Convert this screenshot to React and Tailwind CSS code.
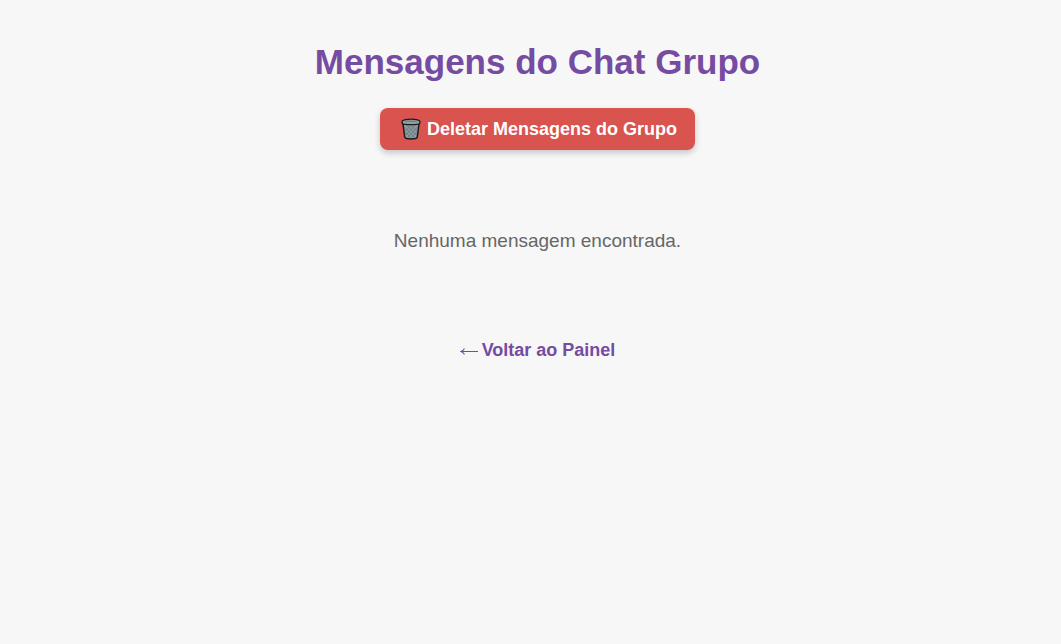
function TrashIcon() {
  return (
    <svg viewBox="0 0 20 22" className="h-[22px] w-5 shrink-0" aria-hidden="true">
      <path d="M1.8 4.5 L3.7 18.6 Q4 20.3 5.6 20.6 Q10 21.3 14.4 20.6 Q16 20.3 16.3 18.6 L18.2 4.5 Z" fill="#8c9da3" stroke="#1d1a1a" strokeWidth="1.5" strokeLinejoin="round" />
      <path d="M3.5 9 L13.5 19.5 M6 7.5 L15.3 17 M10 7.5 L16 13.5 M4 13.5 L9.5 19.5 M16.5 9 L6.5 19.5 M14 7.5 L4.7 17 M10 7.5 L4 13.5 M16 13.5 L10.5 19.5" stroke="#5d6e75" strokeWidth="0.7" fill="none" />
      <path d="M3.5 1.8 Q10 0.4 16.5 1.8 Q19.3 2.4 19 4.1 Q18.8 5.8 17.6 6.1 Q10 7.3 2.4 6.1 Q1.2 5.8 1 4.1 Q0.7 2.4 3.5 1.8 Z" fill="#8fa0a6" stroke="#1d1a1a" strokeWidth="1.3" />
      <path d="M3.2 3.4 Q10 1.8 16.8 3.4 Q10 4.8 3.2 3.4 Z" fill="#728188" />
    </svg>
  );
}

export default function App() {
  return (
    <main className="flex min-h-screen flex-col items-center bg-[#f7f7f7] pt-10 pl-3.5 text-center font-['Liberation_Sans',Arial,sans-serif]">
      <h1 className="text-[35px] leading-11 font-bold text-[#764ba2]">Mensagens do Chat Grupo</h1>
      <button
        type="button"
        className="mt-6 flex items-center gap-1.5 rounded-lg bg-[#d9534f] py-2 pr-[18px] pl-[21px] text-[18px] leading-[26px] font-bold text-white shadow-[0_3px_6px_rgba(0,0,0,0.2)]"
      >
        <TrashIcon />
        <span>Deletar Mensagens do Grupo</span>
      </button>
      <p className="mt-19 text-[19px] leading-[30px] text-[#666666]">Nenhuma mensagem encontrada.</p>
      <a href="#painel" className="mt-20 flex items-center gap-1 text-[18px] leading-7 font-bold text-[#764ba2]">
        <svg viewBox="0 0 18 12" className="h-3 w-[18px]" fill="none" stroke="currentColor" strokeWidth="1.1" aria-hidden="true">
          <path d="M18 7.5 H1.5 M4.5 4.5 Q3.3 6.6 1 7.5 Q3.3 8.4 4.5 10.5" />
        </svg>
        <span>Voltar ao Painel</span>
      </a>
    </main>
  );
}
